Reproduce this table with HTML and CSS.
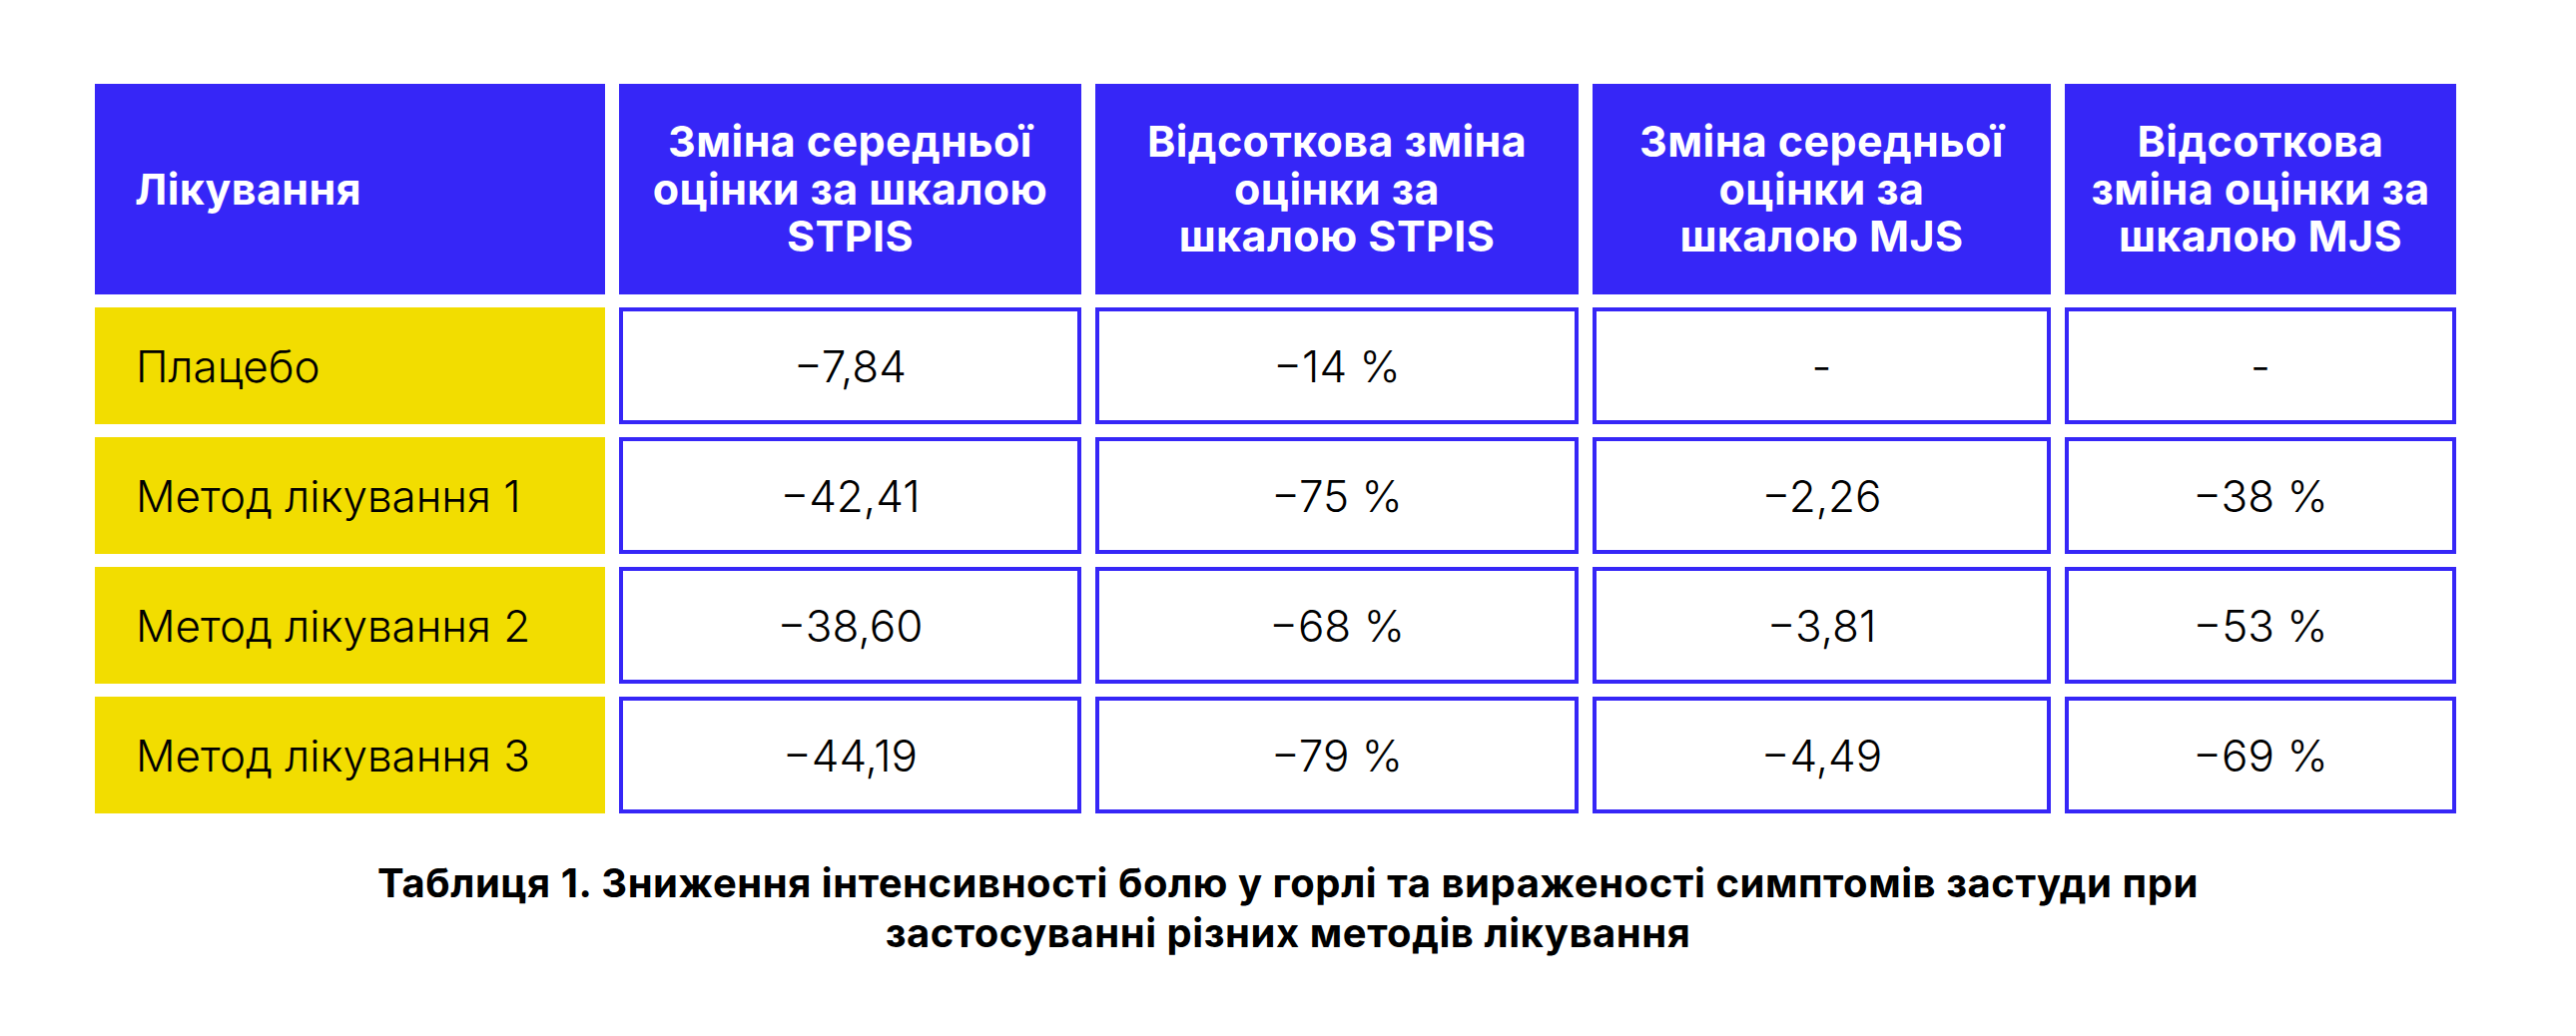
FILE: index.html
```html
<!DOCTYPE html>
<html lang="uk">
<head>
<meta charset="utf-8">
<title>Таблиця 1</title>
<link rel="stylesheet" href="styles.css">
</head>
<body>
<main class="page">
  <div class="grid">
    <div class="cell head first">Лікування</div>
    <div class="cell head">Зміна середньої<br>оцінки за шкалою<br>STPIS</div>
    <div class="cell head">Відсоткова зміна<br>оцінки за<br>шкалою STPIS</div>
    <div class="cell head">Зміна середньої<br>оцінки за<br>шкалою MJS</div>
    <div class="cell head">Відсоткова<br>зміна оцінки за<br>шкалою MJS</div>

    <div class="cell label">Плацебо</div>
    <div class="cell val">−7,84</div>
    <div class="cell val">−14 %</div>
    <div class="cell val">-</div>
    <div class="cell val">-</div>

    <div class="cell label">Метод лікування 1</div>
    <div class="cell val">−42,41</div>
    <div class="cell val">−75 %</div>
    <div class="cell val">−2,26</div>
    <div class="cell val">−38 %</div>

    <div class="cell label">Метод лікування 2</div>
    <div class="cell val">−38,60</div>
    <div class="cell val">−68 %</div>
    <div class="cell val">−3,81</div>
    <div class="cell val">−53 %</div>

    <div class="cell label">Метод лікування 3</div>
    <div class="cell val">−44,19</div>
    <div class="cell val">−79 %</div>
    <div class="cell val">−4,49</div>
    <div class="cell val">−69 %</div>
  </div>
  <p class="caption">Таблиця 1. Зниження інтенсивності болю у горлі та вираженості симптомів застуди при<br>застосуванні різних методів лікування</p>
</main>
</body>
</html>
```

FILE: styles.css
```css
html, body {
  margin: 0;
  padding: 0;
  background: #ffffff;
}

body {
  font-family: "Inter", "Noto Sans", "Liberation Sans", sans-serif;
  color: #000000;
}

.page {
  padding: 84px 0 0 95px;
  width: 2485px;
}

.grid {
  display: grid;
  grid-template-columns: 511px 463px 484px 459px 392px;
  grid-template-rows: 211px repeat(4, 117px);
  column-gap: 14px;
  row-gap: 13px;
}

.cell {
  display: flex;
  align-items: center;
  justify-content: center;
  text-align: center;
  box-sizing: border-box;
}

.head {
  background: #3626f7;
  color: #ffffff;
  font-weight: 700;
  font-size: 43px;
  letter-spacing: 0.4px;
  line-height: 47.5px;
  white-space: nowrap;
}

.head.first {
  justify-content: flex-start;
  text-align: left;
  padding-left: 40px;
}

.label {
  background: #f2dd00;
  justify-content: flex-start;
  padding-left: 41px;
  font-weight: 300;
  font-size: 44px;
}

.val {
  border: 4px solid #3626f7;
  background: #ffffff;
  font-weight: 300;
  font-size: 44px;
}

.caption {
  margin: 45px 0 0 -95px;
  width: 2580px;
  text-align: center;
  font-weight: 700;
  font-size: 40px;
  letter-spacing: 0.55px;
  line-height: 50px;
  color: #000000;
}
```
